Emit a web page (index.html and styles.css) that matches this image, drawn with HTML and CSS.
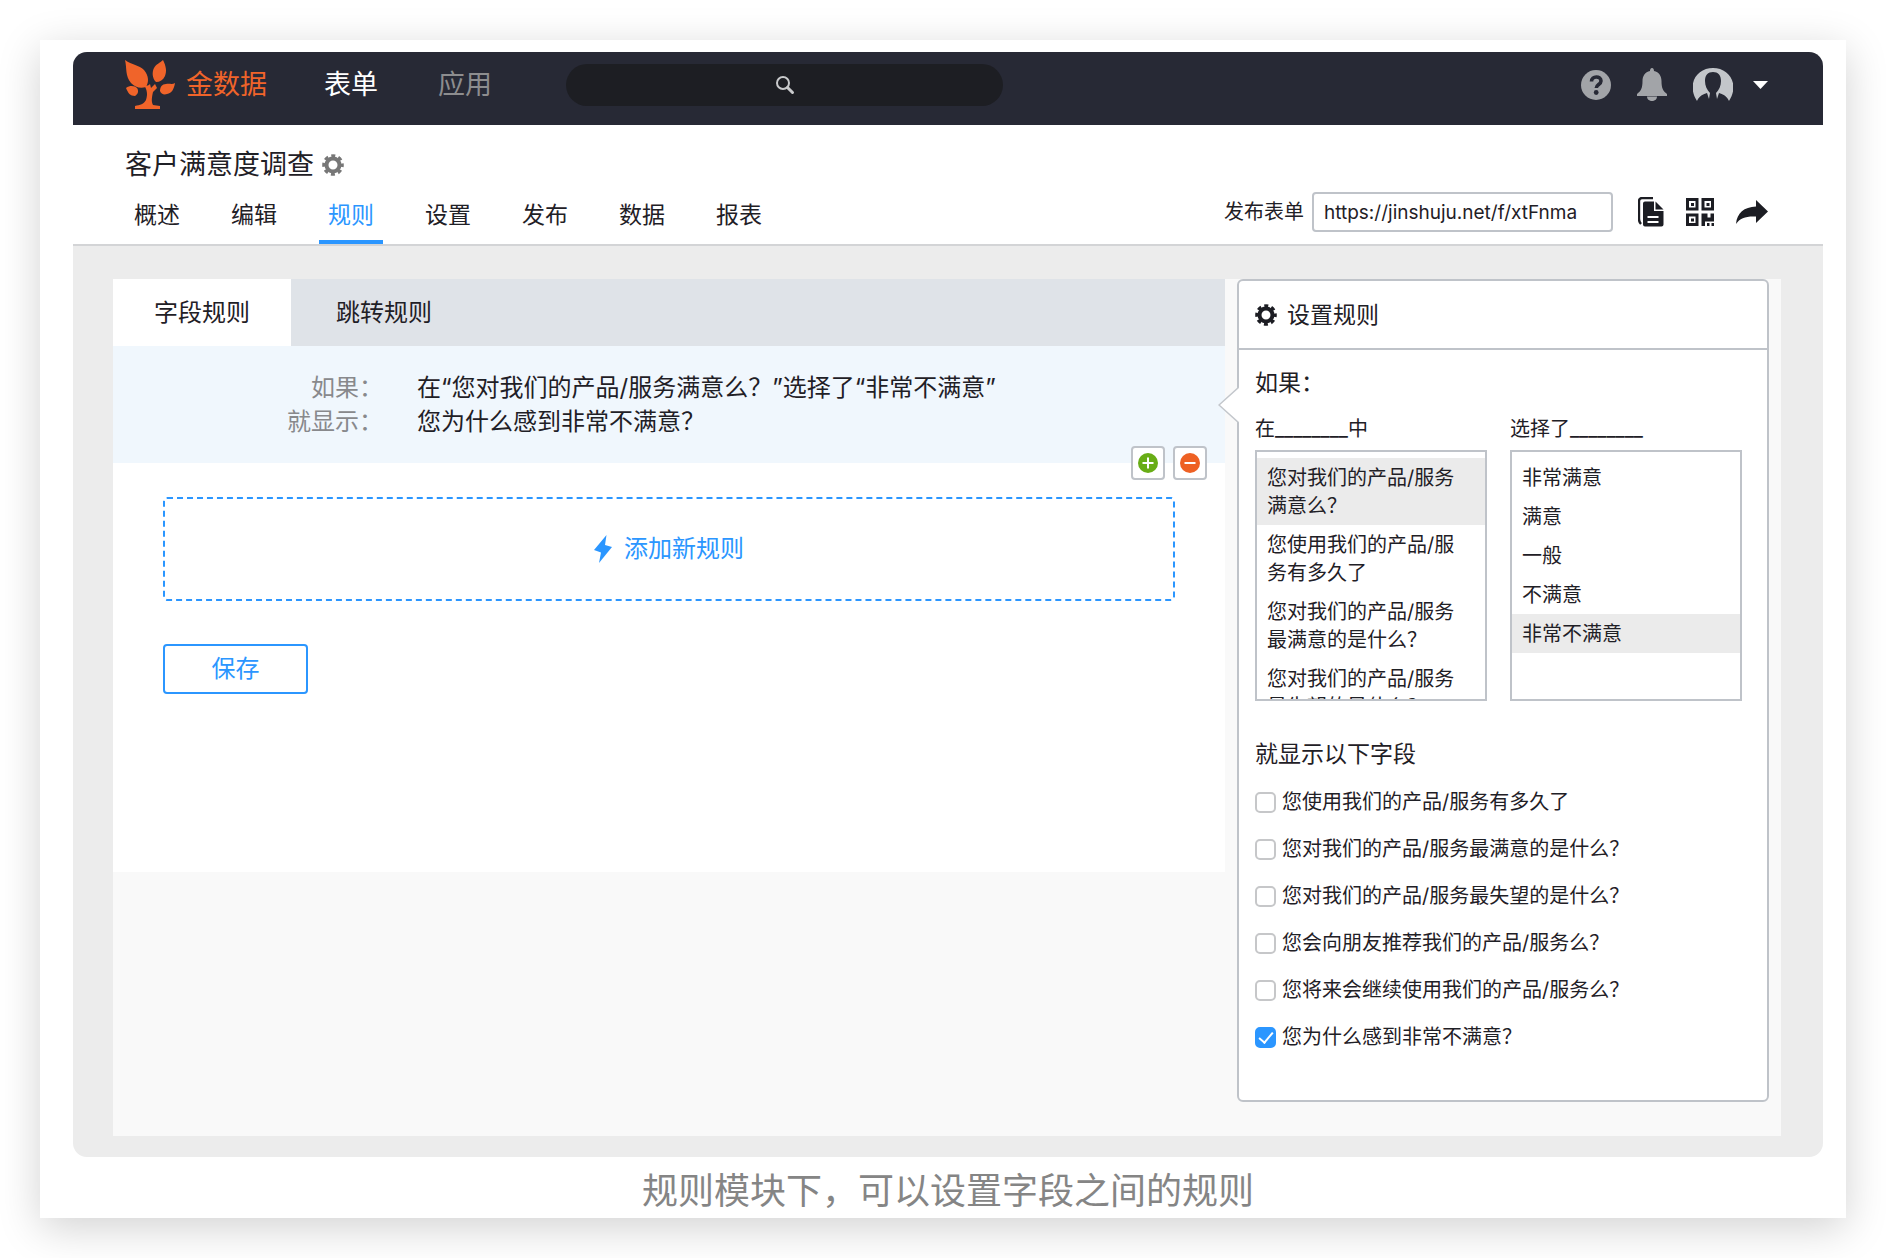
FILE: index.html
```
<!DOCTYPE html>
<html lang="zh-CN">
<head>
    <meta charset="UTF-8">
    <meta name="viewport" content="width=device-width, initial-scale=1.0">
    <title>客户满意度调查</title>
    <link rel="stylesheet" href="styles.css">
</head>
<body>
    <figure class="card">
        <div class="app">
            <header class="topbar">
                <a class="logo" href="#">
                    <svg width="50" height="50" viewBox="0 0 50 50" fill="#f0642a">
                        <path d="M0 0C7 5 14 5 19 10c5 6 5 12 2 17-6 2-11 0-15-4C0 16 2 8 0 0z"/>
                        <path d="M38 0c3 6 4 11 2 16-2 4-5 6-9 6-4-4-4-10-2-14 2-4 6-5 9-8z"/>
                        <path d="M1 28c4-3 9-2 11 0 2 3 1 6-2 8-5 0-7-3-9-8z"/>
                        <path d="M50 23c-1 6-3 10-8 11-3 1-6 0-7-3 0-4 2-7 6-7 3-1 6 1 9-1z"/>
                        <path d="M19 25c3 1 4 1 6-1l1 4 4-4 2 4-4 4c-1 5-2 9 0 13l7 1v3H10v-3c5-1 9-2 11-6 2-6 1-10-2-15z"/>
                    </svg>
                    <span>金数据</span>
                </a>
                <nav class="main-nav">
                    <a class="active" href="#">表单</a>
                    <a href="#">应用</a>
                </nav>
                <button class="search" aria-label="搜索">
                    <svg width="20" height="20" viewBox="0 0 20 20" fill="none" stroke="#c9cacc">
                        <circle cx="8" cy="8" r="6" stroke-width="2"/>
                        <path d="M12.500 12.500L17.500 17.500" stroke-width="3" stroke-linecap="round"/>
                    </svg>
                </button>
                <div class="user-tools">
                    <button aria-label="帮助">
                        <svg width="30" height="30" viewBox="0 0 30 30">
                            <circle cx="15" cy="15" r="15" fill="#a2a4a8"/>
                            <path d="M10.500 11.500c0-6 9.500-6 9.500-.5 0 3.500-4.700 3.500-4.700 7" fill="none" stroke="#272935" stroke-width="3.600"/>
                            <circle cx="15.200" cy="22.500" r="2.400" fill="#272935"/>
                        </svg>
                    </button>
                    <button aria-label="通知">
                        <svg width="30" height="34" viewBox="0 0 30 34" fill="#a2a4a8">
                            <path d="M15 0c1.500 0 2 1.500 2 3 5 1 7.500 5 7.500 10 0 7 1.500 10 5.500 13v2H0v-2c4-3 5.500-6 5.500-13 0-5 2.500-9 7.500-10 0-1.500.5-3 2-3z"/>
                            <path d="M10 28.500h10c0 6-10 6-10 0z"/>
                        </svg>
                    </button>
                    <button class="account" aria-label="账户">
                        <svg width="40" height="34" viewBox="0 0 40 34" fill="#c3c6ca">
                            <path d="M4 33C-7 16 4 0 20 0s27 16 16 33c-2-4-4-6-10-8l-2 6-1-6c3-3 5-7 5-12 0-6-3-9-8-9s-8 3-8 9c0 5 2 9 5 12l-1 6-2-6c-6 2-8 4-10 8z"/>
                        </svg>
                        <svg width="15" height="8" viewBox="0 0 15 8" fill="#fff">
                            <path d="M0 0h15L7.500 8z"/>
                        </svg>
                    </button>
                </div>
            </header>

            <div class="form-head">
                <h1 class="form-title">
                    客户满意度调查
                    <svg width="22" height="22" viewBox="0 0 22 22" fill="none" stroke="#777">
                        <circle cx="11" cy="11" r="6.500" stroke-width="4"/>
                        <circle cx="11" cy="11" r="9.300" stroke-width="3" stroke-dasharray="4 3.300" stroke-dashoffset="2"/>
                    </svg>
                </h1>
                <div class="form-bar">
                    <nav class="form-tabs">
                        <a href="#">概述</a>
                        <a href="#">编辑</a>
                        <a class="active" href="#">规则</a>
                        <a href="#">设置</a>
                        <a href="#">发布</a>
                        <a href="#">数据</a>
                        <a href="#">报表</a>
                    </nav>
                    <div class="publish">
                        <label for="form-url">发布表单</label>
                        <input type="text" id="form-url" value="https://jinshuju.net/f/xtFnma">
                        <button aria-label="复制">
                            <svg width="26" height="30" viewBox="0 0 26 30">
                                <path d="M15 1H4a3 3 0 0 0-3 3v18q0 3 2 5" fill="none" stroke="#1c1d23" stroke-width="2.400"/>
                                <path d="M7 4.500h9V14h9.500v13.500a2 2 0 0 1-2 2H7a2 2 0 0 1-2-2v-21a2 2 0 0 1 2-2z" fill="#1c1d23"/>
                                <path d="M17.500 4.500l8 8h-8z" fill="#1c1d23"/>
                                <path d="M9.500 20h11M9.500 25h11" stroke="#fff" stroke-width="2"/>
                            </svg>
                        </button>
                        <button aria-label="二维码">
                            <svg width="28" height="30" viewBox="0 0 28 30" fill="#1c1d23">
                                <path d="M1.500 2.500h9.500v9.500H1.500zM17 2.500h9.500v9.500H17zM1.500 18h9.500v9.500H1.500z" fill="none" stroke="#1c1d23" stroke-width="3"/>
                                <path d="M5 6h3v3H5zM20.500 6h3v3h-3zM5 21.500h3v3H5z"/>
                                <path d="M15.500 16.500h6v4h3v-4H28v8h-9v4.500h-3.500zM21 26h2.500v3H21zM25.500 26H28v3h-2.500z"/>
                            </svg>
                        </button>
                        <button aria-label="分享">
                            <svg width="32" height="24" viewBox="0 0 32 24" fill="#1c1d23">
                                <path d="M20 0l12 11.500L20 23v-6.500C10 16 4 18 0 24 1 13 8 7 20 6.500z"/>
                            </svg>
                        </button>
                    </div>
                </div>
            </div>

            <main class="workspace">
                <section class="rules">
                    <div class="rule-tabs">
                        <button class="active">字段规则</button>
                        <button>跳转规则</button>
                    </div>
                    <div class="rule">
                        <dl>
                            <dt>如果：</dt>
                            <dd>在“您对我们的产品/服务满意么？”选择了“非常不满意”</dd>
                            <dt>就显示：</dt>
                            <dd>您为什么感到非常不满意？</dd>
                        </dl>
                        <div class="rule-actions">
                            <button aria-label="增加">
                                <svg width="20" height="20" viewBox="0 0 20 20">
                                    <circle cx="10" cy="10" r="10" fill="#68ad16"/>
                                    <path d="M10 4.500v11M4.500 10h11" stroke="#fff" stroke-width="2"/>
                                </svg>
                            </button>
                            <button aria-label="删除">
                                <svg width="20" height="20" viewBox="0 0 20 20">
                                    <circle cx="10" cy="10" r="10" fill="#ee6124"/>
                                    <path d="M4.500 10h11" stroke="#fff" stroke-width="2"/>
                                </svg>
                            </button>
                        </div>
                    </div>
                    <div class="rules-body">
                        <button class="add-rule">
                            <svg width="18" height="28" viewBox="0 0 18 28" fill="#2b96ff">
                                <path d="M12.500 0L0 15l7 2.500L5 28l13-16-7-2z"/>
                            </svg>
                            添加新规则
                        </button>
                        <button class="save">保存</button>
                    </div>
                </section>

                <aside class="panel">
                    <svg class="panel-arrow" width="21" height="36" viewBox="0 0 21 36">
                        <path d="M21 0L1 18l20 18" fill="#fff" stroke="#c3c7cc" stroke-width="1.500"/>
                    </svg>
                    <h2 class="panel-title">
                        <svg width="22" height="22" viewBox="0 0 22 22" fill="none" stroke="#1c1d23">
                            <circle cx="11" cy="11" r="6.500" stroke-width="4"/>
                            <circle cx="11" cy="11" r="9.300" stroke-width="3" stroke-dasharray="4 3.300" stroke-dashoffset="2"/>
                        </svg>
                        设置规则
                    </h2>
                    <div class="panel-body">
                        <h3>如果：</h3>
                        <div class="pickers">
                            <div class="picker">
                                <p id="field-label">在________中</p>
                                <ul role="listbox" aria-labelledby="field-label">
                                    <li role="option" aria-selected="true">您对我们的产品/服务满意么？</li>
                                    <li role="option">您使用我们的产品/服务有多久了</li>
                                    <li role="option">您对我们的产品/服务最满意的是什么？</li>
                                    <li role="option">您对我们的产品/服务最失望的是什么？</li>
                                </ul>
                            </div>
                            <div class="picker">
                                <p id="choice-label">选择了________</p>
                                <ul role="listbox" aria-labelledby="choice-label">
                                    <li role="option">非常满意</li>
                                    <li role="option">满意</li>
                                    <li role="option">一般</li>
                                    <li role="option">不满意</li>
                                    <li role="option" aria-selected="true">非常不满意</li>
                                </ul>
                            </div>
                        </div>
                        <h3>就显示以下字段</h3>
                        <div class="fields">
                            <label><input type="checkbox">您使用我们的产品/服务有多久了</label>
                            <label><input type="checkbox">您对我们的产品/服务最满意的是什么？</label>
                            <label><input type="checkbox">您对我们的产品/服务最失望的是什么？</label>
                            <label><input type="checkbox">您会向朋友推荐我们的产品/服务么？</label>
                            <label><input type="checkbox">您将来会继续使用我们的产品/服务么？</label>
                            <label><input type="checkbox" checked>您为什么感到非常不满意？</label>
                        </div>
                    </div>
                </aside>
            </main>
        </div>
        <figcaption>规则模块下，可以设置字段之间的规则</figcaption>
    </figure>
</body>
</html>
```

FILE: styles.css
```
* {
    margin: 0;
    padding: 0;
    box-sizing: border-box;
}

body {
    font-family: Inter, 'Noto Sans CJK SC', sans-serif;
    font-size: 20px;
    line-height: 28px;
    color: #1f2026;
    background: #fff;
}

button {
    font: inherit;
    color: inherit;
    background: none;
    border: none;
    cursor: pointer;
}

a {
    color: inherit;
    text-decoration: none;
}

svg {
    display: block;
    flex-shrink: 0;
}

.card {
    margin: 40px;
    padding: 12px 23px 0 33px;
    background: #fff;
    box-shadow: 0 10px 40px rgba(0, 0, 0, 0.18);
}

.app {
    background: #ececec;
    border-radius: 14px;
    overflow: hidden;
}

.card figcaption {
    padding: 8px 0 1px;
    font-size: 36px;
    line-height: 52px;
    color: #858585;
    text-align: center;
}

/* top bar */
.topbar {
    display: flex;
    align-items: center;
    height: 73px;
    padding: 0 55px 7px 52px;
    background: #272935;
    font-size: 27px;
}

.logo {
    display: flex;
    align-items: center;
    gap: 11px;
    color: #f0642a;
}

.main-nav {
    display: flex;
    gap: 60px;
    margin: 0 74px 0 57px;
    color: #8d8d8f;
}

.main-nav .active {
    color: #fff;
}

.search {
    display: flex;
    align-items: center;
    justify-content: center;
    width: 437px;
    height: 42px;
    border-radius: 21px;
    background: #1d1e23;
}

.user-tools {
    display: flex;
    align-items: center;
    gap: 26px;
    margin-left: auto;
}

.account {
    display: flex;
    align-items: center;
    gap: 20px;
}

/* form title and tabs */
.form-head {
    padding: 22px 55px 0 52px;
    background: #fff;
    border-bottom: 2px solid #d3d4d6;
}

.form-title {
    display: flex;
    align-items: center;
    gap: 8px;
    font-size: 27px;
    font-weight: 400;
    line-height: 36px;
}

.form-bar {
    display: flex;
    justify-content: space-between;
    margin-top: 7px;
}

.form-tabs {
    display: flex;
    gap: 33px;
    font-size: 23px;
    line-height: 50px;
}

.form-tabs a {
    width: 64px;
    text-align: center;
    border-bottom: 4px solid transparent;
}

.form-tabs .active {
    color: #2b96ff;
    border-color: #2b96ff;
}

.publish {
    display: flex;
    align-items: center;
    padding-bottom: 10px;
}

.publish input {
    width: 301px;
    height: 40px;
    margin: 0 3px 0 8px;
    padding: 0 10px;
    font: inherit;
    font-size: 19px;
    color: inherit;
    border: 2px solid #bfc3c9;
    border-radius: 4px;
}

.publish button {
    margin-left: 22px;
}

/* rules */
.workspace {
    display: flex;
    align-items: flex-start;
    gap: 12px;
    margin: 33px 42px 21px 40px;
    padding: 0 12px 34px 0;
    background: #f9f9f9;
}

.rules {
    flex: 1;
    background: #fff;
    font-size: 24px;
}

.rule-tabs {
    display: flex;
    gap: 4px;
    background: #dfe3e8;
}

.rule-tabs button {
    height: 67px;
    padding: 0 41px;
}

.rule-tabs .active {
    background: #fff;
}

.rule {
    position: relative;
    height: 117px;
    padding-top: 25px;
    background: #f0f7fd;
}

.rule dl {
    display: grid;
    grid-template-columns: 270px 1fr;
    column-gap: 34px;
    line-height: 34px;
}

.rule dt {
    color: #88898c;
    text-align: right;
}

.rule-actions {
    position: absolute;
    right: 18px;
    bottom: -17px;
    display: flex;
    gap: 8px;
}

.rule-actions button {
    display: flex;
    align-items: center;
    justify-content: center;
    width: 34px;
    height: 34px;
    background: #fff;
    border: 2px solid #bfc3c9;
    border-radius: 4px;
}

.rules-body {
    padding: 34px 50px 178px;
    color: #2b96ff;
}

.add-rule {
    display: flex;
    align-items: center;
    justify-content: center;
    gap: 12px;
    width: 100%;
    height: 104px;
    margin-bottom: 43px;
    border: 2px dashed #2b96ff;
    border-radius: 4px;
}

.save {
    width: 145px;
    height: 50px;
    border: 2px solid #2b96ff;
    border-radius: 4px;
}

/* settings panel */
.panel {
    position: relative;
    width: 532px;
    background: #fff;
    border: 2px solid #bfc3c9;
    border-radius: 6px;
}

.panel-arrow {
    position: absolute;
    top: 106px;
    left: -21px;
}

.panel-title {
    display: flex;
    align-items: center;
    gap: 10px;
    height: 69px;
    padding-left: 16px;
    font-size: 23px;
    font-weight: 400;
    border-bottom: 2px solid #bfc3c9;
}

.panel-body {
    padding: 16px 25px 49px 16px;
}

.panel-body h3 {
    font-size: 23px;
    font-weight: 400;
    line-height: 34px;
}

.pickers {
    display: grid;
    grid-template-columns: 1fr 1fr;
    gap: 23px;
    margin: 15px 0 36px;
}

.picker ul {
    height: 251px;
    margin-top: 7px;
    padding-top: 6px;
    list-style: none;
    border: 2px solid #bfc3c9;
    overflow: hidden;
}

.picker li {
    padding: 6px 20px 5px 10px;
}

.picker li[aria-selected="true"] {
    background: #ebebeb;
}

.fields {
    display: grid;
    gap: 19px;
    margin-top: 17px;
}

.fields label {
    display: flex;
    align-items: center;
    gap: 6px;
}

.fields input {
    display: flex;
    align-items: center;
    justify-content: center;
    width: 21px;
    height: 21px;
    appearance: none;
    background: #fff;
    border: 2px solid #c6c7c9;
    border-radius: 5px;
}

.fields input:checked {
    background: #2b96ff;
    border-color: #2b96ff;
}

.fields input:checked::after {
    content: '';
    width: 6px;
    height: 12px;
    margin-bottom: 3px;
    border: solid #fff;
    border-width: 0 2px 2px 0;
    transform: rotate(40deg);
}
```
